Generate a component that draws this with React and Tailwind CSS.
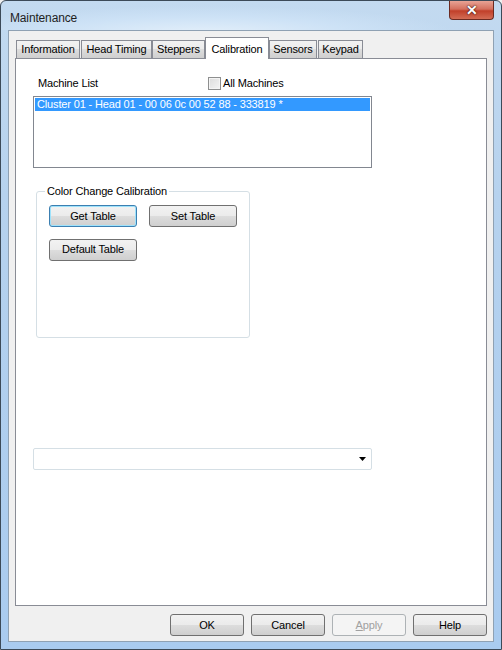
import React, { useState } from "react";

const font = { fontFamily: '"Liberation Sans", Arial, sans-serif', letterSpacing: "-0.15px" };

// tab label, width, left margin (reference pixel positions)
const tabs = [
  { label: "Information", w: "w-[64px]", ml: "ml-0" },
  { label: "Head Timing", w: "w-[71px]", ml: "ml-[1px]" },
  { label: "Steppers", w: "w-[53px]", ml: "ml-0" },
  { label: "Calibration", w: "w-[64px]", ml: "ml-0" },
  { label: "Sensors", w: "w-[48px]", ml: "ml-0" },
  { label: "Keypad", w: "w-[45px]", ml: "ml-[1px]" },
];

// Win7 style push button
const WinButton = ({ children, focused, disabled, className = "" }) => {
  const border = disabled
    ? "border-[#adb2b5]"
    : focused
    ? "border-[#3c7fb1] shadow-[inset_0_0_0_1px_#9ee2fb]"
    : "border-[#707070]";
  const bg = disabled
    ? "bg-[#f4f4f4]"
    : "bg-[linear-gradient(to_bottom,#f2f2f2_0%,#ebebeb_50%,#dddddd_50%,#cfcfcf_100%)]";
  return (
    <button
      className={`h-[22px] rounded-[3px] border text-[11px] leading-none ${border} ${bg} ${
        disabled ? "text-[#a0a0a0]" : "text-black"
      } ${className}`}
    >
      {children}
    </button>
  );
};

const App = () => {
  const [allMachines, setAllMachines] = useState(false);
  const [active] = useState(3);

  return (
    <div className="w-[502px] h-[650px] bg-[#f0f0f0]" style={font}>
      {/* Window frame */}
      <div className="w-[502px] h-[650px] rounded-t-[6px] border border-[#3c4a58] bg-[linear-gradient(to_bottom,#c3daf0_0%,#b6d2ee_30%,#a9cbef_100%)] flex flex-col">
        {/* Title bar */}
        <div className="h-[29px] flex items-start justify-between bg-[radial-gradient(ellipse_at_40%_110%,#e3effa_0%,#cde2f6_35%,transparent_60%)]">
          <span className="pl-[9px] pt-[8px] text-[12px] text-[#1e1e1e]">Maintenance</span>
          <div className="mr-[7px] w-[45px] h-[19px] rounded-b-[4px] border border-t-0 border-[#6b2a21] bg-[linear-gradient(to_bottom,#e8a395_0%,#d4705e_45%,#c1402a_55%,#d36c55_100%)] flex items-center justify-center">
            <span className="text-white text-[14px] font-bold leading-none [text-shadow:0_0_2px_#3a0f08,0_0_1px_#3a0f08]">
              ✕
            </span>
          </div>
        </div>

        {/* Client area */}
        <div className="mx-[7px] h-[612px] border border-[#8fa1b3] bg-[#f0f0f0] flex flex-col">
          {/* Tab strip */}
          <div className="flex items-end pl-[7px] pt-[6px] h-[28px] -mb-px relative z-10">
            {tabs.map((t, i) =>
              i === active ? (
                <div
                  key={t.label}
                  className={`${t.w} ${t.ml} h-[22px] border border-b-0 border-[#898c95] bg-white flex items-start justify-center pt-[3px] text-[11px] text-black`}
                >
                  {t.label}
                </div>
              ) : (
                <div
                  key={t.label}
                  className={`${t.w} ${t.ml} h-[19px] border border-[#898c95] bg-[linear-gradient(to_bottom,#f2f2f2_0%,#ebebeb_50%,#dddddd_50%,#cfcfcf_100%)] flex items-center justify-center text-[11px] text-black`}
                >
                  {t.label}
                </div>
              )
            )}
          </div>

          {/* Tab panel */}
          <div className="ml-[6px] w-[472px] h-[548px] border border-[#898c95] bg-white">
            {/* Machine list header */}
            <div className="flex items-center h-[13px] mt-[18px]">
              <span className="ml-[22px] w-[170px] text-[11px] text-black">Machine List</span>
              <label className="flex items-center gap-[2px] cursor-default">
                <span
                  onClick={() => setAllMachines(!allMachines)}
                  className="w-[13px] h-[13px] border border-[#8e8f8f] bg-[linear-gradient(135deg,#dcdcdc_0%,#f4f4f4_100%)] shadow-[inset_0_0_0_1px_#f4f4f4] flex items-center justify-center text-[10px] leading-none"
                >
                  {allMachines ? "✓" : ""}
                </span>
                <span className="text-[11px] text-black">All Machines</span>
              </label>
            </div>

            {/* Listbox */}
            <div className="ml-[17px] mt-[6px] w-[339px] h-[72px] border border-[#828790] bg-white p-px">
              <div className="h-[13px] bg-[#3399ff] text-white text-[11px] leading-[13px] pl-[2px]">
                Cluster 01 - Head 01 - 00 06 0c 00 52 88 - 333819 *
              </div>
            </div>

            {/* Group box */}
            <fieldset className="ml-[20px] mt-[17px] w-[214px] h-[153px] border border-[#d5dfe5] rounded-[3px] px-[12px] pt-[7px]">
              <legend className="-ml-[4px] px-[2px] text-[11px] text-black leading-[13px]">
                Color Change Calibration
              </legend>
              <div className="flex gap-[12px]">
                <WinButton focused className="w-[88px]">Get Table</WinButton>
                <WinButton className="w-[88px]">Set Table</WinButton>
              </div>
              <div className="mt-[9px]">
                <WinButton className="w-[88px]">Default Table</WinButton>
              </div>
            </fieldset>

            {/* Combo box */}
            <div className="ml-[17px] mt-[110px] w-[339px] h-[22px] border border-[#d5dfe5] rounded-[2px] bg-white flex items-center justify-end pr-[5px]">
              <svg width="7" height="4" viewBox="0 0 7 4">
                <path d="M0 0h7L3.5 4z" fill="#000" />
              </svg>
            </div>
          </div>

          {/* Dialog buttons */}
          <div className="flex justify-end gap-[7px] pr-[6px] mt-[8px]">
            <WinButton className="w-[74px]">OK</WinButton>
            <WinButton className="w-[74px]">Cancel</WinButton>
            <WinButton disabled className="w-[74px]">
              <span className="underline">A</span>pply
            </WinButton>
            <WinButton className="w-[74px]">Help</WinButton>
          </div>
        </div>
      </div>
    </div>
  );
};

export default App;
